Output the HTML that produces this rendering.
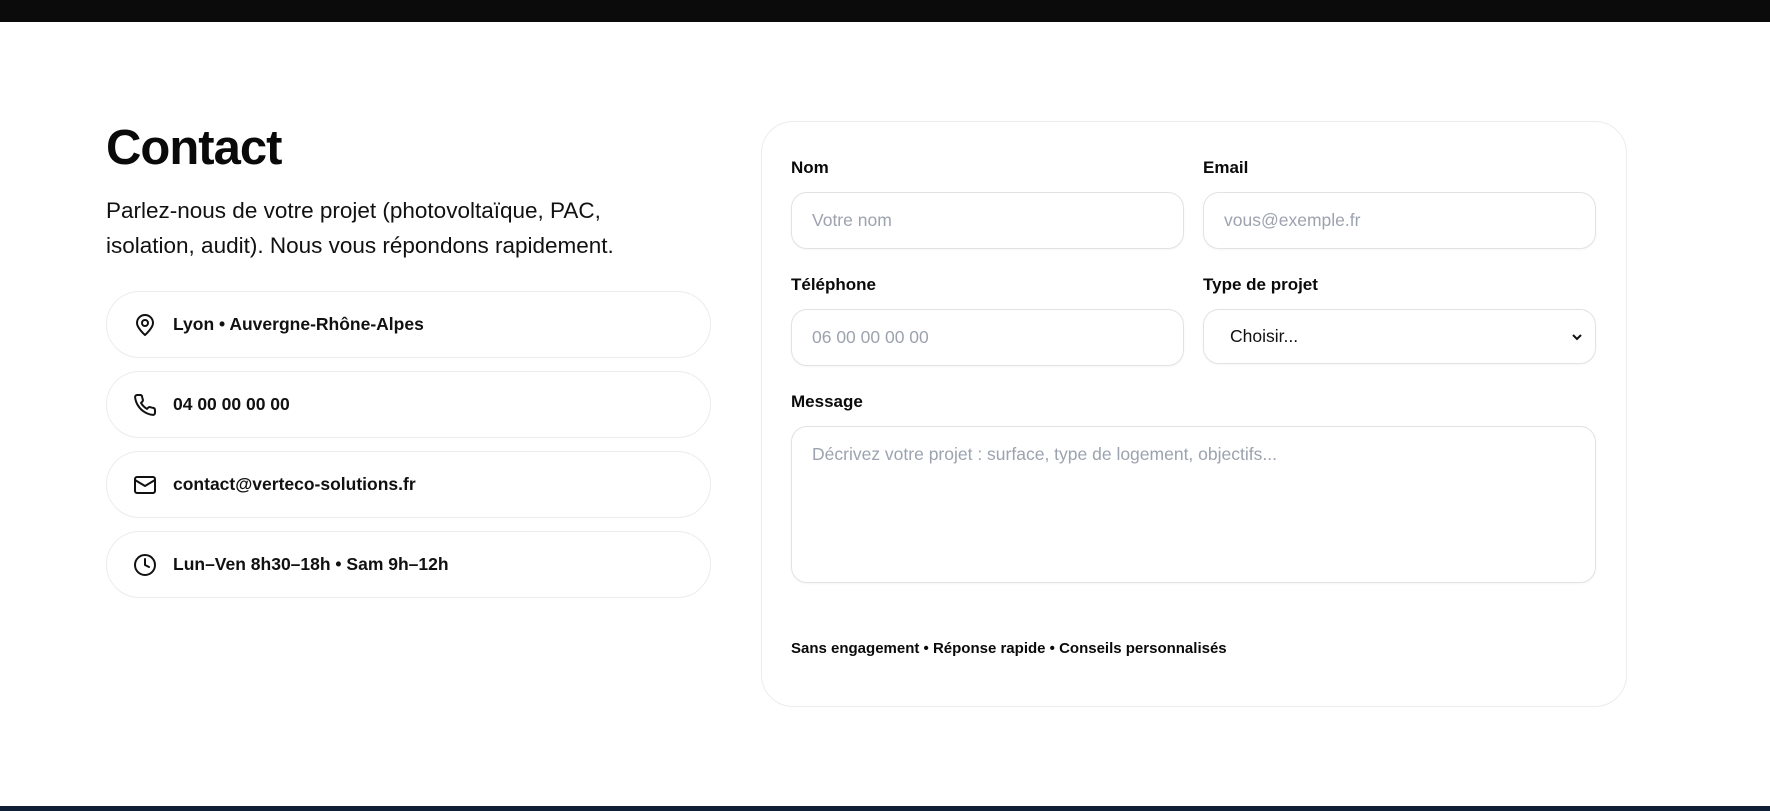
<!DOCTYPE html>
<html><head><meta charset="utf-8"><style>
*{box-sizing:border-box;margin:0;padding:0}
body{width:1770px;height:811px;overflow:hidden;background:#fff;font-family:"Liberation Sans",sans-serif;color:#0a0a0a;position:relative}
.top{position:absolute;left:0;top:0;width:1770px;height:22px;background:#0b0b0c}
.bot{position:absolute;left:0;top:806px;width:1770px;height:5px;background:#0f2036}
h1{position:absolute;left:106px;top:120px;font-size:49px;font-weight:700;letter-spacing:-1px}
.lead{position:absolute;left:106px;top:193px;font-size:22.5px;line-height:35px;width:580px;color:#111}
.card{position:absolute;left:106px;width:605px;height:67px;border:1px solid #ececec;border-radius:34px;display:flex;align-items:center;padding-left:26px;font-size:17.5px;font-weight:700;color:#111}
.card svg{width:24px;height:24px;margin-right:16px;flex:none}
.form{position:absolute;left:761px;top:121px;width:866px;height:586px;border:1px solid #ececec;border-radius:32px}
.lbl{position:absolute;font-size:17px;font-weight:700}
.in{position:absolute;height:57px;border:1px solid #e2e2e2;border-radius:16px;padding-left:20px;display:flex;align-items:center;font-size:17.5px;color:#9ca3af;box-shadow:0 1px 2px rgba(0,0,0,.04)}
.foot{position:absolute;left:791px;top:640px;font-size:15px;font-weight:700}
</style></head><body>
<div class="top"></div>
<h1>Contact</h1>
<div class="lead">Parlez-nous de votre projet (photovoltaïque, PAC, isolation, audit). Nous vous répondons rapidement.</div>
<div class="card" style="top:291px"><svg viewBox="0 0 24 24" fill="none" stroke="#111" stroke-width="2" stroke-linecap="round" stroke-linejoin="round"><path d="M20 10c0 5-8 12-8 12S4 15 4 10a8 8 0 0 1 16 0z"/><circle cx="12" cy="10" r="3"/></svg>Lyon • Auvergne-Rhône-Alpes</div>
<div class="card" style="top:371px"><svg viewBox="0 0 24 24" fill="none" stroke="#111" stroke-width="2" stroke-linecap="round" stroke-linejoin="round"><path d="M22 16.9v3a2 2 0 0 1-2.2 2 19.8 19.8 0 0 1-8.6-3.1 19.5 19.5 0 0 1-6-6A19.8 19.8 0 0 1 2.1 4.2 2 2 0 0 1 4.1 2h3a2 2 0 0 1 2 1.7c.1.9.4 1.900.7 2.8a2 2 0 0 1-.5 2.1L8 9.9a16 16 0 0 0 6 6l1.3-1.3a2 2 0 0 1 2.1-.4c.9.3 1.8.6 2.8.7a2 2 0 0 1 1.700 2z"/></svg>04 00 00 00 00</div>
<div class="card" style="top:451px"><svg viewBox="0 0 24 24" fill="none" stroke="#111" stroke-width="2" stroke-linecap="round" stroke-linejoin="round"><rect x="2" y="4" width="20" height="16" rx="2"/><path d="M22 7l-10 6L2 7"/></svg>contact@verteco-solutions.fr</div>
<div class="card" style="top:531px"><svg viewBox="0 0 24 24" fill="none" stroke="#111" stroke-width="2" stroke-linecap="round" stroke-linejoin="round"><circle cx="12" cy="12" r="10"/><path d="M12 6v6l4 2"/></svg>Lun–Ven 8h30–18h • Sam 9h–12h</div>

<div class="form"></div>
<div class="lbl" style="left:791px;top:158px">Nom</div>
<div class="lbl" style="left:1203px;top:158px">Email</div>
<div class="in" style="left:791px;top:192px;width:393px">Votre nom</div>
<div class="in" style="left:1203px;top:192px;width:393px">vous@exemple.fr</div>
<div class="lbl" style="left:791px;top:275px">Téléphone</div>
<div class="lbl" style="left:1203px;top:275px">Type de projet</div>
<div class="in" style="left:791px;top:309px;width:393px">06 00 00 00 00</div>
<div class="in" style="left:1203px;top:309px;width:393px;height:55px;color:#111;padding-left:26px">Choisir...<svg style="position:absolute;right:12px;top:22px" width="12" height="10" viewBox="0 0 12 10"><path d="M2 3l4 4 4-4" fill="none" stroke="#111" stroke-width="2"/></svg></div>
<div class="lbl" style="left:791px;top:392px">Message</div>
<div class="in" style="left:791px;top:426px;width:805px;height:157px;align-items:flex-start;padding-top:17px">Décrivez votre projet : surface, type de logement, objectifs...</div>
<div class="foot">Sans engagement • Réponse rapide • Conseils personnalisés</div>
<div class="bot"></div>
</body></html>
